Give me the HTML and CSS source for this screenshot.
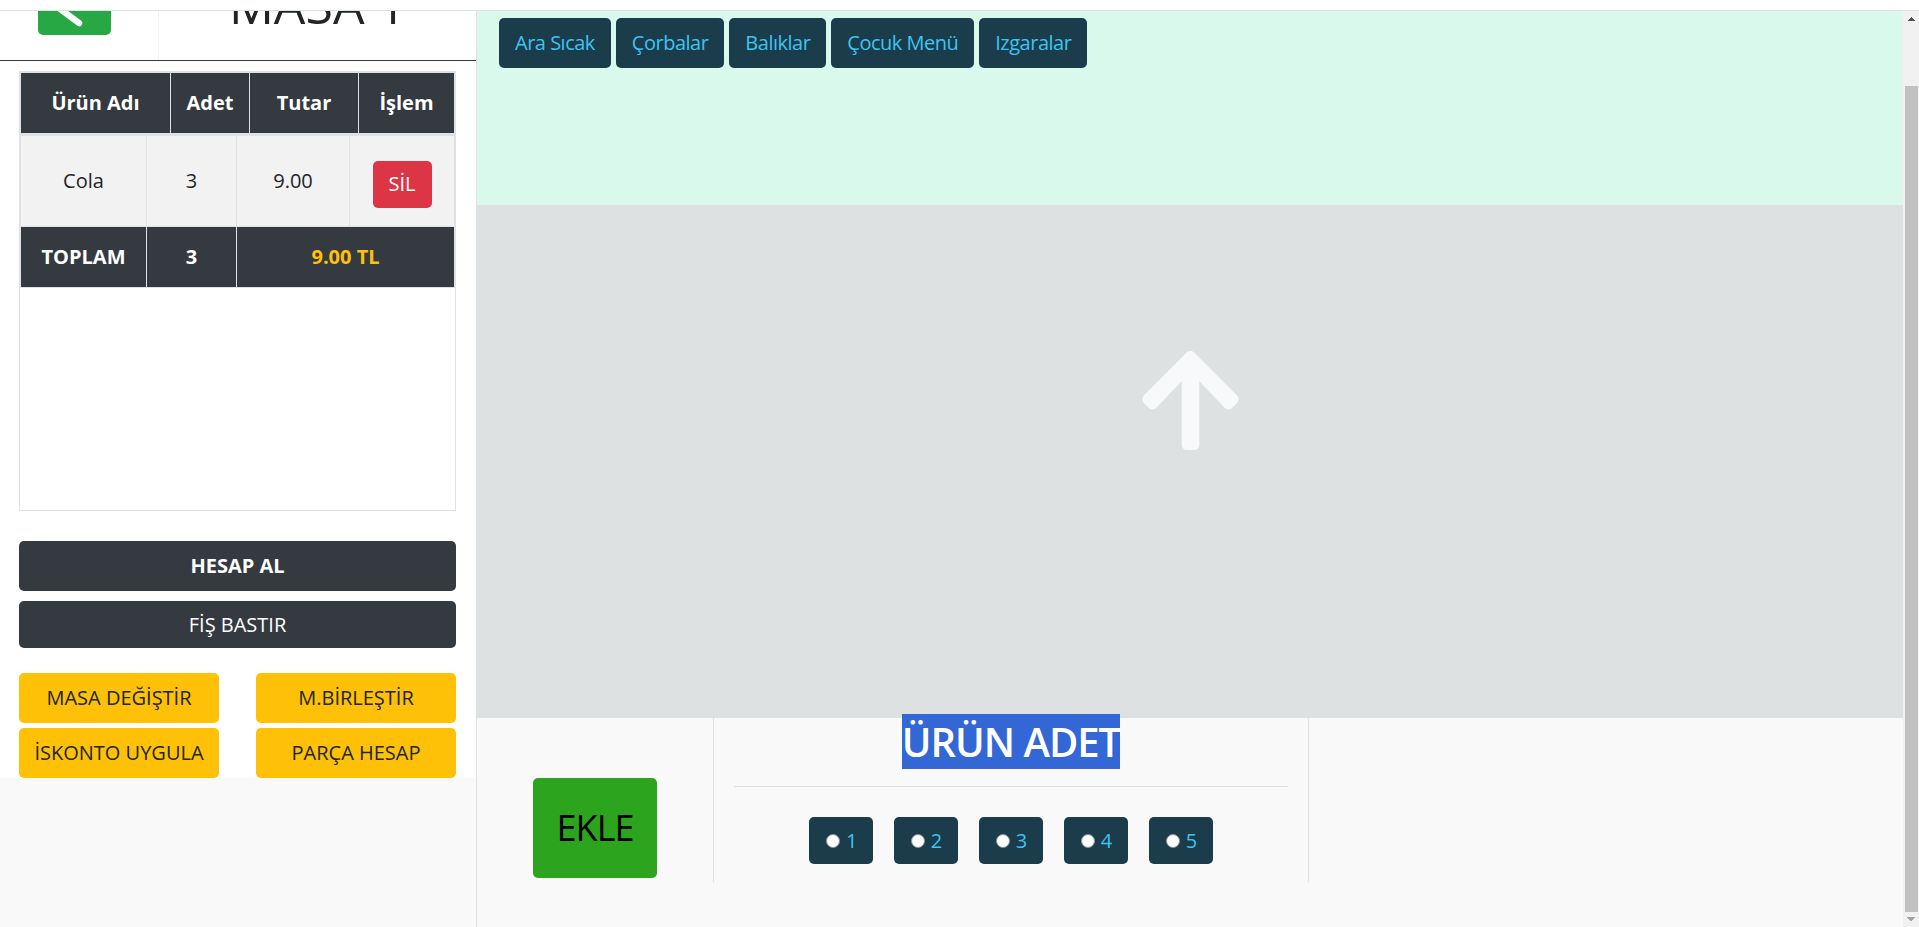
FILE: index.html
```html
<!DOCTYPE html>
<html lang="tr">
<head>
<meta charset="utf-8">
<title>Masa 1</title>
<link rel="stylesheet" href="styles.css">
</head>
<body>
<div class="topbar"></div>
<div class="viewport">
  <div class="scroller" id="scroller">
    <div class="page">
      <aside class="side">
        <div class="side-white">
          <header class="side-head">
            <div class="back-cell">
              <a class="btn-back" href="#" aria-label="Geri">
                <svg class="back-icon" viewBox="0 0 73 60" width="73" height="60" aria-hidden="true">
                  <polyline points="41,8 14,28 41,48" fill="none" stroke="#fff" stroke-width="6.5" stroke-linecap="round" stroke-linejoin="round"/>
                </svg>
              </a>
            </div>
            <div class="title-cell"><h1 class="title">MASA 1</h1></div>
          </header>
          <div class="side-body">
            <div class="order-box">
              <table class="tbl tbl-head">
                <thead>
                  <tr><th class="h1c">Ürün Adı</th><th class="h2c">Adet</th><th class="h3c">Tutar</th><th class="h4c">İşlem</th></tr>
                </thead>
              </table>
              <table class="tbl tbl-body">
                <tbody>
                  <tr class="row-item">
                    <td class="b1c">Cola</td><td class="b2c">3</td><td class="b3c">9.00</td>
                    <td class="b4c"><button class="btn btn-red">SİL</button></td>
                  </tr>
                  <tr class="row-total">
                    <td>TOPLAM</td><td>3</td><td colspan="2" class="total-amt">9.00 TL</td>
                  </tr>
                </tbody>
              </table>
            </div>
            <button class="btn btn-dark btn-hesap">HESAP AL</button>
            <button class="btn btn-dark btn-fis">FİŞ BASTIR</button>
            <div class="action-grid">
              <button class="btn btn-yellow">MASA DEĞİŞTİR</button>
              <button class="btn btn-yellow">M.BİRLEŞTİR</button>
              <button class="btn btn-yellow">İSKONTO UYGULA</button>
              <button class="btn btn-yellow">PARÇA HESAP</button>
            </div>
          </div>
        </div>
      </aside>
      <main class="main">
        <section class="categories">
          <button class="btn btn-cat">Ara Sıcak</button>
          <button class="btn btn-cat">Çorbalar</button>
          <button class="btn btn-cat">Balıklar</button>
          <button class="btn btn-cat">Çocuk Menü</button>
          <button class="btn btn-cat">Izgaralar</button>
        </section>
        <section class="products">
          <svg class="up-arrow" viewBox="0 0 448 512" width="99" height="113" aria-hidden="true">
            <path fill="#f8f9fa" d="M34.9 289.5l-22.2-22.2c-9.4-9.4-9.4-24.6 0-33.9L207 39c9.4-9.4 24.6-9.4 33.9 0l194.3 194.3c9.4 9.4 9.4 24.6 0 33.9L413 289.4c-9.5 9.5-25 9.3-34.3-.4L264 168.6V456c0 13.3-10.7 24-24 24h-32c-13.3 0-24-10.7-24-24V168.6L69.2 289.1c-9.3 9.8-24.8 10-34.3.4z"/>
          </svg>
        </section>
        <section class="qty">
          <div class="qty-add"><button class="btn btn-ekle">EKLE</button></div>
          <div class="qty-pick">
            <h2 class="qty-title"><span class="sel">ÜRÜN ADET</span></h2>
            <hr class="qty-rule">
            <div class="radios">
              <label class="radio-btn"><input type="radio" name="adet" value="1"><span>1</span></label>
              <label class="radio-btn"><input type="radio" name="adet" value="2"><span>2</span></label>
              <label class="radio-btn"><input type="radio" name="adet" value="3"><span>3</span></label>
              <label class="radio-btn"><input type="radio" name="adet" value="4"><span>4</span></label>
              <label class="radio-btn"><input type="radio" name="adet" value="5"><span>5</span></label>
            </div>
          </div>
          <div class="qty-empty"></div>
        </section>
      </main>
    </div>
  </div>
  <div class="vscroll" aria-hidden="true">
    <span class="vs-btn vs-up"></span>
    <span class="vs-track"><span class="vs-thumb"></span></span>
    <span class="vs-btn vs-down"></span>
  </div>
</div>
<script src="script.js"></script>
</body>
</html>
```

FILE: styles.css
```css
*, *::before, *::after { box-sizing: border-box; }

html, body { margin: 0; height: 100%; }

body {
  font-family: "Open Sans", "Noto Sans", "Liberation Sans", sans-serif;
  font-size: 20px;
  line-height: 1.5;
  color: #212529;
  background: #fff;
  overflow: hidden;
}

.topbar {
  height: 11px;
  background: #fff;
  border-bottom: 1px solid #dee2e6;
}

.viewport {
  display: flex;
  height: 916px;
}

.scroller {
  flex: 1;
  height: 100%;
  overflow-y: scroll;
  background: #f9f9f9;
  scrollbar-width: none;
}
.scroller::-webkit-scrollbar { display: none; }

/* drawn scrollbar (classic look) */
.vscroll {
  width: 16px;
  display: flex;
  flex-direction: column;
  background: #f1f1f1;
}
.vs-btn { display: block; flex: none; }
.vs-up {
  height: 16px;
  background: conic-gradient(from 135deg at 50% 0, #505050 0 90deg, transparent 0) 50% 6px / 8px 4px no-repeat;
}
.vs-down {
  height: 15px;
  background: conic-gradient(from -45deg at 50% 100%, #a3a3a3 0 90deg, transparent 0) 50% 5px / 8px 4px no-repeat;
}
.vs-track {
  flex: 1;
  display: flex;
  flex-direction: column;
  justify-content: flex-end;
  padding: 0 1px 0 2px;
}
.vs-thumb {
  display: block;
  height: 826px;
  background: #c1c1c1;
}

.page {
  display: grid;
  grid-template-columns: 477px 1fr;
  min-height: 983px;
}

/* ---------- left side ---------- */
.side { border-right: 1px solid #dee2e6; }
.side-white { background: #fff; }

.side-head {
  display: flex;
  height: 117px;
  border-bottom: 1px solid #343a40;
}
.back-cell {
  width: 159px;
  border-right: 1px solid #f1f1f1;
  padding: 31px 0 0 38px;
}
.btn-back {
  display: block;
  width: 73px;
  height: 60px;
  background: #28a745;
  border-radius: 5px;
}
.back-icon { display: block; }

.title-cell {
  flex: 1;
  text-align: center;
  padding-top: 31px;
}
.title {
  margin: 0;
  font-size: 50px;
  font-weight: 400;
  line-height: 60px;
  color: #212529;
}

.side-body { padding: 10px 20px 0 19px; }

.order-box {
  height: 440px;
  border: 1px solid #dee2e6;
}

.tbl {
  width: 100%;
  border-collapse: separate;
  border-spacing: 0;
  table-layout: fixed;
  border: 1px solid #dee2e6;
}
.tbl th, .tbl td {
  padding: 0;
  text-align: center;
  vertical-align: middle;
}
.tbl-head th {
  height: 60px;
  background: #343a40;
  color: #fff;
  font-weight: 700;
  border-left: 1px solid #dee2e6;
}
.tbl-head th:first-child { border-left: 0; }
.h1c { width: 149px; }
.h2c { width: 79px; }
.h3c { width: 109px; }

.tbl-body { border-top-width: 2px; }
.b1c { width: 125px; }
.b2c { width: 90px; }
.b3c { width: 113px; }

.row-item td {
  height: 90px;
  background: #f2f2f2;
  border-left: 1px solid #dee2e6;
}
.row-item td:first-child { border-left: 0; }

.row-total td {
  height: 61px;
  background: #343a40;
  color: #fff;
  font-weight: 700;
  border-top: 1px solid #dee2e6;
  border-left: 1px solid #dee2e6;
}
.row-total td:first-child { border-left: 0; }
.row-total .total-amt { color: #ffc107; }

/* ---------- buttons ---------- */
.btn {
  display: inline-block;
  font: inherit;
  line-height: 30px;
  border: 1px solid transparent;
  border-radius: 5px;
  padding: 9px 15px;
  text-align: center;
  cursor: pointer;
}
.btn-red {
  background: #dc3545;
  color: #fff;
  padding: 7.5px 15px;
  margin-top: 6px;
}
.btn-dark {
  display: block;
  width: 100%;
  background: #343a40;
  color: #fff;
  padding: 0;
}
.btn-hesap { margin-top: 30px; height: 50px; font-weight: 700; }
.btn-fis { margin-top: 10px; height: 47px; }

.action-grid {
  margin-top: 25px;
  display: grid;
  grid-template-columns: 200px 200px;
  column-gap: 37px;
  row-gap: 5px;
}
.btn-yellow {
  height: 50px;
  padding: 0;
  background: #ffc107;
  color: #212529;
}

/* ---------- main ---------- */
.main { display: flex; flex-direction: column; }

.categories {
  height: 261px;
  background: #d9f9ec;
  padding: 74px 0 0 22px;
  display: flex;
  align-items: flex-start;
  gap: 5px;
}
.btn-cat {
  height: 50px;
  padding: 0 15px;
  background: #1b3c4a;
  color: #3fc3f1;
  letter-spacing: -0.5px;
}

.products {
  height: 513px;
  background: #dde1e2;
  padding-top: 139px;
}
.up-arrow { display: block; margin: 0 auto; }

.qty {
  flex: 1;
  display: grid;
  grid-template-columns: 236px 596px 1fr;
  align-items: start;
  background: #f9f9f9;
}
.qty-add {
  padding-top: 60px;
  text-align: center;
}
.btn-ekle {
  width: 124px;
  height: 100px;
  padding: 0;
  line-height: 98px;
  font-size: 36px;
  letter-spacing: -1px;
  background: #2da41d;
  color: #000;
}
.qty-pick {
  border-left: 1px solid #dee2e6;
  border-right: 1px solid #dee2e6;
  padding: 0 20px 18px;
  text-align: center;
}
.qty-title {
  margin: 0;
  font-size: 40px;
  font-weight: 600;
  letter-spacing: -1px;
  line-height: 48px;
}
.sel { background: #3367d6; color: #fff; }
.qty-rule {
  margin: 20px 0 0;
  border: 0;
  border-top: 1px solid rgba(0, 0, 0, 0.1);
}
.radios {
  margin-top: 30px;
  display: flex;
  justify-content: center;
  gap: 20.5px;
}
.radio-btn {
  display: inline-flex;
  align-items: center;
  gap: 6px;
  height: 47px;
  padding: 0 16px 0 17px;
  background: #1b3c4a;
  color: #3fc3f1;
  border-radius: 5px;
}
.radio-btn input {
  appearance: none;
  -webkit-appearance: none;
  margin: 0;
  width: 14px;
  height: 14px;
  border-radius: 50%;
  background: #fff;
  border: 1px solid #8f8f8f;
}
```

FILE: script.js
```js
var scroller = document.getElementById('scroller');
scroller.scrollTop = scroller.scrollHeight;
```
